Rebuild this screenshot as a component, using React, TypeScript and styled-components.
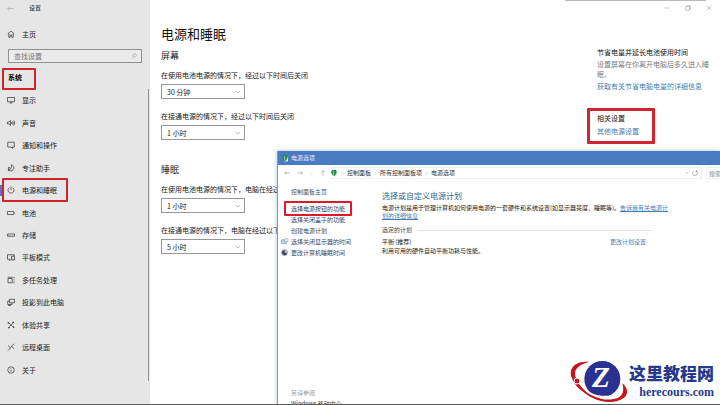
import React from "react";
import styled, { createGlobalStyle, css } from "styled-components";

const GlobalStyle = createGlobalStyle`
  * { box-sizing: border-box; }
  html, body { margin: 0; padding: 0; }
  body {
    background: #fff;
    color: #222;
    overflow: hidden;
    font-family: "Noto Sans CJK SC", "Noto Sans", sans-serif;
    font-size: 7px;
    line-height: 10px;
  }
  h1, h2, h3, p, ul { margin: 0; padding: 0; font-weight: 400; }
  button, input, select { font: inherit; color: inherit; }
  a { color: #3f7fb5; text-decoration: none; }
`;

/* ---------- shared parts ---------- */

const IconSvg = styled.svg<{ $size?: number }>`
  width: ${(p) => p.$size ?? 8}px;
  height: ${(p) => p.$size ?? 8}px;
  flex: none;
  display: block;
  fill: none;
  stroke: currentColor;
  stroke-width: 1.3;
  overflow: visible;
`;

const IconButton = styled.button`
  display: flex;
  align-items: center;
  justify-content: center;
  padding: 0;
  border: 0;
  background: none;
`;

const Highlight = styled.span<{ $inset: string; $thick?: number; $color?: string }>`
  position: absolute;
  inset: ${(p) => p.$inset};
  border: ${(p) => p.$thick ?? 2}px solid ${(p) => p.$color ?? "#d0242e"};
  border-radius: 1px;
  pointer-events: none;
`;

/* ---------- settings window ---------- */

const Desktop = styled.div`
  position: relative;
  display: flex;
  height: 100vh;
  overflow: hidden;
  border-bottom: 1px solid #5c5c5c;
`;

const Sidebar = styled.aside`
  width: 150px;
  flex: none;
  display: flex;
  flex-direction: column;
  background: #e6e6e6;
  padding-bottom: 23px;
`;

const SideTitle = styled.header`
  display: flex;
  align-items: center;
  gap: 15px;
  height: 16px;
  padding-left: 7px;
  font-size: 6px;
  & button { color: #9a9a9a; }
`;

const NavLink = styled.a<{ $active?: boolean }>`
  position: relative;
  display: flex;
  align-items: center;
  gap: 7px;
  height: 100%;
  padding-left: 7px;
  color: #222;
  ${(p) =>
    p.$active &&
    css`
      &::before {
        content: "";
        position: absolute;
        left: 0;
        width: 2px;
        height: 11px;
        background: #6a70c0;
      }
    `}
`;

const HomeRow = styled.div`
  height: 14px;
  margin-top: 11px;
`;

const SearchBox = styled.label`
  display: flex;
  align-items: center;
  height: 14px;
  margin: 8px 8px 0;
  padding: 0 4px 0 5px;
  border: 1px solid #8f8f8f;
  background: #ebebeb;
  color: #8a8a8a;
`;

const SearchInput = styled.input`
  flex: 1;
  min-width: 0;
  height: 10px;
  padding: 0;
  border: 0;
  outline: 0;
  background: none;
  &::placeholder { color: #757575; opacity: 1; }
`;

const GroupTitle = styled.h2`
  position: relative;
  align-self: flex-start;
  margin-top: 9px;
  padding-left: 8px;
  font-size: 7px;
  font-weight: 700;
  color: #000;
`;

const NavList = styled.ul`
  flex: 1;
  display: grid;
  grid-auto-rows: 1fr;
  margin: 7px 1px 0 0;
  list-style: none;
  border-right: 1px solid #949494;
`;

const Main = styled.main`
  flex: 1;
  display: flex;
  flex-direction: column;
`;

const WindowBar = styled.div`
  position: relative;
  display: flex;
  justify-content: flex-end;
  align-items: center;
  gap: 15px;
  height: 16px;
  padding-right: 8px;
  color: #888;
  &::before {
    content: "";
    position: absolute;
    top: 0;
    right: 14px;
    width: 141px;
    height: 1px;
    background: #b9b9b9;
  }
`;

const Columns = styled.div`
  display: flex;
  justify-content: space-between;
  padding: 8px 8px 0 11px;
`;

const PageTitle = styled.h1`
  font-size: 13px;
  line-height: 20px;
  margin-bottom: 5px;
  color: #111;
`;

const Section = styled.section`
  margin-bottom: 24px;
`;

const SectionTitle = styled.h2`
  font-size: 9px;
  line-height: 14px;
  margin-bottom: 7px;
`;

const Field = styled.div`
  display: flex;
  flex-direction: column;
  gap: 4px;
  & + & { margin-top: 13px; }
`;

const FieldLabel = styled.label`
  white-space: nowrap;
`;

const SelectWrap = styled.div`
  display: flex;
  align-items: center;
  width: 84px;
  height: 15px;
  margin-bottom: -1px;
  padding-right: 3px;
  border: 1px solid #979797;
  color: #777;
`;

const Select = styled.select`
  flex: 1;
  height: 13px;
  margin-right: -12px;
  padding: 0 12px 0 5px;
  border: 0;
  background: transparent;
  color: #222;
  appearance: none;
`;

const Related = styled.div`
  width: 115px;
  padding-top: 22px;
  display: flex;
  flex-direction: column;
  align-items: flex-start;
`;

const RelatedTitle = styled.h3`
  font-size: 7px;
  line-height: 12px;
  color: #111;
`;

const Hint = styled.p`
  line-height: 10px;
  margin: 1px 0 2px;
  color: #7c7c7c;
`;

const RelatedBox = styled.div`
  position: relative;
  display: flex;
  flex-direction: column;
  gap: 2px;
  margin-top: 21px;
`;

/* ---------- power options window ---------- */

const Popup = styled.section`
  position: absolute;
  left: 277px;
  top: 151px;
  right: 0;
  bottom: 0;
  display: flex;
  flex-direction: column;
  background: #fff;
  border-left: 1px solid #7f99c9;
  box-shadow: 0 0 4px rgba(90, 150, 210, 0.6);
  font-size: 6px;
  line-height: 8px;
`;

const PopupTitle = styled.header`
  display: flex;
  align-items: center;
  gap: 2px;
  height: 14px;
  flex: none;
  padding-left: 3px;
  background: #487bc2;
  color: #e6edf8;
`;

const AddressBar = styled.nav`
  display: flex;
  align-items: center;
  height: 16px;
  flex: none;
  padding-left: 6px;
  color: #333;
`;

const NavButtons = styled.div`
  display: flex;
  gap: 7px;
  color: #777;
`;

const Crumbs = styled.div`
  flex: 1;
  display: flex;
  align-items: center;
  gap: 3px;
  height: 12px;
  margin-left: 4px;
  border: 1px solid #f0f0f0;
  border-left: 0;
  white-space: nowrap;
`;

const Crumb = styled.button`
  padding: 0;
  border: 0;
  background: none;
`;

const CrumbTools = styled.div`
  display: flex;
  gap: 3px;
  margin-left: auto;
  padding-right: 3px;
  color: #666;
`;

const PopupSearch = styled.input`
  width: 14px;
  height: 12px;
  margin-left: 4px;
  padding: 0 0 0 2px;
  border: 1px solid #f0f0f0;
  border-right: 0;
  outline: 0;
  &::placeholder { color: #888; opacity: 1; }
`;

const PopupBody = styled.div`
  flex: 1;
  min-height: 0;
  display: flex;
`;

const TaskPane = styled.aside`
  width: 104px;
  flex: none;
  display: flex;
  flex-direction: column;
  padding-top: 7px;
`;

const TaskList = styled.ul`
  list-style: none;
  margin-top: 7px;
`;

const TaskItem = styled.li`
  position: relative;
  display: flex;
  align-items: center;
  gap: 3px;
  height: 11px;
  padding-left: 3px;
  white-space: nowrap;
`;

const TaskIcon = styled.span`
  width: 7px;
  display: flex;
`;

const TaskLink = styled.a`
  color: #3c4658;
`;

const TaskHead = styled.a`
  padding-left: 13px;
  color: #555;
`;

const SeeAlso = styled.div`
  display: flex;
  flex-direction: column;
  gap: 3px;
  margin: auto 0 -4px;
  padding-left: 13px;
  color: #999;
  & a { color: #333; }
`;

const PopupMain = styled.div`
  flex: 1;
  padding: 9px 46px 0 0;
`;

const PopupHeading = styled.h1`
  font-size: 8px;
  line-height: 12px;
  margin-bottom: 2px;
  color: #2c6a94;
`;

const Description = styled.p`
  & a { text-decoration: underline; }
`;

const PlanGroup = styled.section`
  margin-right: 22px;
  padding-top: 6px;
`;

const PlanLegend = styled.h2`
  display: flex;
  align-items: center;
  gap: 5px;
  margin-bottom: 3px;
  font-size: 6px;
  color: #444;
  &::after {
    content: "";
    flex: 1;
    height: 1px;
    background: #e2e2e2;
  }
`;

const PlanRow = styled.div`
  display: flex;
  justify-content: space-between;
  padding-right: 6px;
  line-height: 9px;
`;

/* ---------- site mark ---------- */

const SiteMark = styled.div`
  position: absolute;
  right: 0;
  bottom: -1px;
  display: flex;
  align-items: center;
  height: 48px;
  padding: 0 6px 0 10px;
  background: #fff;
`;

const MarkSvg = styled.svg`
  width: 60px;
  height: 42px;
  flex: none;
`;

const MarkText = styled.div`
  display: flex;
  flex-direction: column;
  align-items: flex-end;
  color: #253a8c;
`;

const MarkName = styled.strong`
  font-size: 17px;
  line-height: 22px;
  font-weight: 900;
`;

const MarkUrl = styled.span`
  font: 700 12px/16px "Liberation Serif", serif;
`;

/* ---------- icons ---------- */

const navIcons: Record<string, React.ReactNode> = {
  home: <path d="M1.5 8 8 2l6.5 6M3.5 7v7.5h3V10h3v4.5h3V7" />,
  display: <path d="M1 3h14v8.500H1zM8 11.500V14M5.500 14h5" />,
  sound: <path d="M1 6v4h2.500L7 13V3L3.500 6zM9 6q1.500 2 0 4M11.200 4.500q2.800 3.500 0 7M13.500 3q3.800 5 0 10" />,
  notify: <path d="M1.500 2.500h13v9.500h-3.500v3L8 12H1.500z" />,
  focus: <path d="M8.500 1.500c5 1.500 6.500 6.500 3.500 10-2.500 3-7.500 3-10 .5 5 .5 8.500-4.500 6.500-10.500zM2 7h3.500L2 10.500h3.500" />,
  power: <path d="M8 1v7M4.800 3.200a6 6 0 1 0 6.400 0" />,
  battery: <path d="M1 5h12.500v6H1zM15 7v2" />,
  storage: <path d="M1 6h14v4.500H1zM3 8.200h1.500" />,
  tablet: <path d="M7 12.500H1v-9h13.500v3M9 6.500h6v7.500H9zM4 14.500h3M11 12h2" />,
  multi: <path d="M2 5h8.500v8.500H2zM1 2.500h10.500M14 2v3M14 7v2M14 11v3.500" />,
  project: <path d="M5 2.500h10v7H5zM5 6H1.500v7H10V9.500M3 13v2h5" />,
  share: <path d="m2 2 12 12M14 2 2 14M2 2l1 4M14 2l-4 1M2 14l4-1M14 14l-1-4" />,
  remote: <path d="m2 5 5 4.500L2 15M14.500 1.500l-5.500 5 5.500 5M7 9.500l2-3" />,
  about: (
    <>
      <circle cx="8" cy="8" r="6.500" />
      <path d="M8 7v4.500M8 4.300v1.400" />
    </>
  ),
};

const Icon = ({ d, size }: { d: string; size?: number }) => (
  <IconSvg $size={size} viewBox="0 0 16 16" aria-hidden>
    <path d={d} />
  </IconSvg>
);

const ARROW_LEFT = "M15 8H2M6 4 2 8l4 4";
const ARROW_RIGHT = "M1 8h13M10 4l4 4-4 4";
const ARROW_UP = "M8 15V2M3.500 6.500 8 2l4.500 4.500";
const CHEVRON_DOWN = "m2 5.500 6 5 6-5";
const CHEVRON_RIGHT = "m5 2 6 6-6 6";

const PowerGlyph = () => (
  <IconSvg viewBox="0 0 16 16" aria-hidden>
    <path d="M7 5h7v10H7z" fill="#dfe8dc" stroke="none" />
    <path d="M2 6Q3 1 7 2l4-1q4 4 1 9l-3 4q-5-1-7-8z" fill="#2a8a4c" stroke="none" />
    <path d="M7 4v7l2-2" stroke="#bfe6b4" />
  </IconSvg>
);

const navItems: [string, string][] = [
  ["display", "显示"],
  ["sound", "声音"],
  ["notify", "通知和操作"],
  ["focus", "专注助手"],
  ["power", "电源和睡眠"],
  ["battery", "电池"],
  ["storage", "存储"],
  ["tablet", "平板模式"],
  ["multi", "多任务处理"],
  ["project", "投影到此电脑"],
  ["share", "体验共享"],
  ["remote", "远程桌面"],
  ["about", "关于"],
];

const NavIcon = ({ name }: { name: string }) => (
  <IconSvg viewBox="0 0 16 16" aria-hidden>{navIcons[name]}</IconSvg>
);

const DurationField = ({ id, label, value }: { id: string; label: string; value: string }) => (
  <Field>
    <FieldLabel htmlFor={id}>{label}</FieldLabel>
    <SelectWrap>
      <Select id={id} defaultValue={value}>
        <option>{value}</option>
      </Select>
      <Icon d={CHEVRON_DOWN} size={6} />
    </SelectWrap>
  </Field>
);

const PowerOptions = () => (
  <Popup>
    <PopupTitle>
      <PowerGlyph />
      电源选项
    </PopupTitle>
    <AddressBar>
      <NavButtons>
        <IconButton aria-label="后退"><Icon d={ARROW_LEFT} size={6} /></IconButton>
        <IconButton aria-label="前进" disabled><Icon d={ARROW_RIGHT} size={6} /></IconButton>
        <IconButton aria-label="最近"><Icon d={CHEVRON_DOWN} size={3} /></IconButton>
        <IconButton aria-label="向上"><Icon d={ARROW_UP} size={6} /></IconButton>
      </NavButtons>
      <Crumbs>
        <PowerGlyph />
        <Icon d={CHEVRON_RIGHT} size={3} />
        <Crumb>控制面板</Crumb>
        <Icon d={CHEVRON_RIGHT} size={3} />
        <Crumb>所有控制面板项</Crumb>
        <Icon d={CHEVRON_RIGHT} size={3} />
        <Crumb>电源选项</Crumb>
        <CrumbTools>
          <IconButton aria-label="展开"><Icon d={CHEVRON_DOWN} size={4} /></IconButton>
          <IconButton aria-label="刷新">
            <Icon d="M11 2.500a6.500 6.500 0 1 1-6 0M11 6.500v-4h4" size={6} />
          </IconButton>
        </CrumbTools>
      </Crumbs>
      <PopupSearch placeholder="搜索" aria-label="搜索" />
    </AddressBar>
    <PopupBody>
      <TaskPane>
        <TaskHead href="#home">控制面板主页</TaskHead>
        <TaskList>
          <TaskItem>
            <TaskIcon />
            <TaskLink href="#buttons">选择电源按钮的功能</TaskLink>
            <Highlight $inset="-2px 30px -2px 6px" $color="#e0182c" />
          </TaskItem>
          <TaskItem>
            <TaskIcon />
            <TaskLink href="#lid">选择关闭盖子的功能</TaskLink>
          </TaskItem>
          <TaskItem>
            <TaskIcon />
            <TaskLink href="#create">创建电源计划</TaskLink>
          </TaskItem>
          <TaskItem>
            <TaskIcon>
              <IconSvg $size={7} viewBox="0 0 16 16" aria-hidden>
                <path d="M1 4h12v9H1z" fill="#b9d3ec" stroke="#6f95bd" />
                <circle cx="12" cy="5" r="4" fill="#e6f0fa" stroke="#6f95bd" />
              </IconSvg>
            </TaskIcon>
            <TaskLink href="#display-off">选择关闭显示器的时间</TaskLink>
          </TaskItem>
          <TaskItem>
            <TaskIcon>
              <IconSvg $size={7} viewBox="0 0 16 16" aria-hidden>
                <circle cx="8" cy="8" r="7" fill="#b8bac6" stroke="#8c8f9c" />
                <path d="M8 2a6 6 0 1 0 6 8Q7 10 8 2z" fill="#3d4160" stroke="none" />
              </IconSvg>
            </TaskIcon>
            <TaskLink href="#sleep">更改计算机睡眠时间</TaskLink>
          </TaskItem>
        </TaskList>
        <SeeAlso>
          <span>另请参阅</span>
          <a href="#mobility">Windows 移动中心</a>
        </SeeAlso>
      </TaskPane>
      <PopupMain>
        <PopupHeading>选择或自定义电源计划</PopupHeading>
        <Description>
          电源计划是用于管理计算机如何使用电源的一套硬件和系统设置(如显示器亮度、睡眠等)。
          <a href="#plans">告诉我有关电源计划的详细信息</a>
        </Description>
        <PlanGroup>
          <PlanLegend>选定的计划</PlanLegend>
          <PlanRow>
            <span>平衡 (推荐)</span>
            <a href="#edit">更改计划设置</a>
          </PlanRow>
          <PlanRow>利用可用的硬件自动平衡功耗与性能。</PlanRow>
        </PlanGroup>
      </PopupMain>
    </PopupBody>
  </Popup>
);

const Mark = () => (
  <SiteMark>
    <MarkSvg viewBox="36 36 180 126" aria-hidden>
      <path
        d="M96 42C60 38 34 58 43 86c10 30 34 48 62 58-24-16-44-36-50-60-5-20 10-34 41-42z"
        fill="#c4161f"
      />
      <circle cx="136" cy="93" r="54" fill="#2b3190" />
      <path d="M70 108c26 36 78 46 118 24l-12 16c-40 14-84 0-106-40z" fill="#fff" />
      <path
        d="M66 116c28 26 66 42 100 38 28-4 38-20 30-48 16 12 20 32 4 44-34 24-104 10-134-34z"
        fill="#c4161f"
      />
      <circle cx="60" cy="99" r="9" fill="#c4161f" stroke="#fff" strokeWidth="3" />
      <text
        x="132"
        y="118"
        textAnchor="middle"
        fill="#fff"
        fontFamily="Liberation Serif, serif"
        fontSize="88"
        fontWeight="700"
        fontStyle="italic"
      >
        Z
      </text>
    </MarkSvg>
    <MarkText>
      <MarkName>这里教程网</MarkName>
      <MarkUrl>herecours.com</MarkUrl>
    </MarkText>
  </SiteMark>
);

export default function App() {
  return (
    <>
      <GlobalStyle />
      <Desktop>
        <Sidebar>
          <SideTitle>
            <IconButton aria-label="返回"><Icon d={ARROW_LEFT} size={7} /></IconButton>
            设置
          </SideTitle>
          <HomeRow>
            <NavLink href="#home"><NavIcon name="home" />主页</NavLink>
          </HomeRow>
          <SearchBox>
            <SearchInput placeholder="查找设置" aria-label="查找设置" />
            <Icon d="M6.500 9.500 2 14M10 2a4.500 4.500 0 1 1 0 9 4.500 4.500 0 0 1 0-9" size={6} />
          </SearchBox>
          <GroupTitle>
            系统
            <Highlight $inset="-4px -14px -8px 2px" />
          </GroupTitle>
          <NavList>
            {navItems.map(([icon, label]) => (
              <li key={icon}>
                <NavLink href={`#${icon}`} $active={icon === "power"}>
                  <NavIcon name={icon} />
                  {label}
                  {icon === "power" && <Highlight $inset="-1px 80px -1px 2px" />}
                </NavLink>
              </li>
            ))}
          </NavList>
        </Sidebar>
        <Main>
          <WindowBar>
            <IconButton aria-label="最小化"><Icon d="M2 8h12" size={6} /></IconButton>
            <IconButton aria-label="最大化"><Icon d="M2 4h10v10H2zM5 4V2h9v9h-2" size={6} /></IconButton>
            <IconButton aria-label="关闭"><Icon d="m2 2 12 12M14 2 2 14" size={6} /></IconButton>
          </WindowBar>
          <Columns>
            <div>
              <PageTitle>电源和睡眠</PageTitle>
              <Section>
                <SectionTitle>屏幕</SectionTitle>
                <DurationField id="screen-dc" label="在使用电池电源的情况下，经过以下时间后关闭" value="30 分钟" />
                <DurationField id="screen-ac" label="在接通电源的情况下，经过以下时间后关闭" value="1 小时" />
              </Section>
              <Section>
                <SectionTitle>睡眠</SectionTitle>
                <DurationField id="sleep-dc" label="在使用电池电源的情况下，电脑在经过" value="1 小时" />
                <DurationField id="sleep-ac" label="在接通电源的情况下，电脑在经过以下" value="5 小时" />
              </Section>
            </div>
            <Related>
              <RelatedTitle>节省电量并延长电池使用时间</RelatedTitle>
              <Hint>设置屏幕在你离开电脑后多久进入睡眠。</Hint>
              <a href="#tips">获取有关节省电脑电量的详细信息</a>
              <RelatedBox>
                <RelatedTitle>相关设置</RelatedTitle>
                <a href="#more">其他电源设置</a>
                <Highlight $inset="-4px -16px -8px -10px" $thick={3} />
              </RelatedBox>
            </Related>
          </Columns>
        </Main>
        <PowerOptions />
        <Mark />
      </Desktop>
    </>
  );
}
